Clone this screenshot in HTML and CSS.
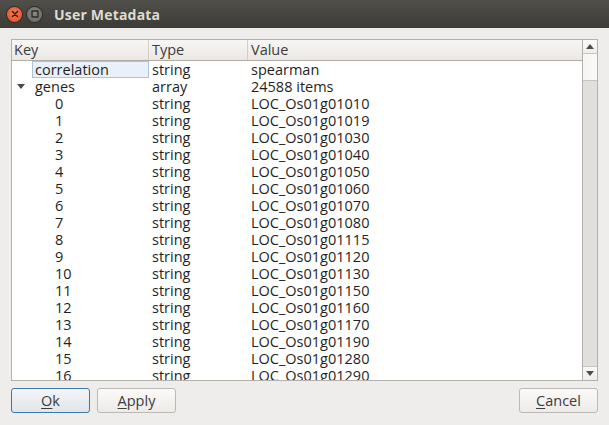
FILE: index.html
```html
<!DOCTYPE html>
<html>
<head>
<meta charset="utf-8">
<link rel="stylesheet" href="styles.css">
</head>
<body>
<div class="window">
  <div class="titlebar">
    <span class="tb-btn close"><svg width="14" height="14" viewBox="0 0 14 14"><path d="M4.5 4.5 L9.5 9.5 M9.5 4.5 L4.5 9.5" stroke="#3a1a10" stroke-width="1.5" stroke-linecap="round"/></svg></span>
    <span class="tb-btn mini"><svg width="14" height="14" viewBox="0 0 14 14"><rect x="4" y="4" width="6" height="6" rx="0.5" fill="none" stroke="#2c2c2a" stroke-width="1.4"/></svg></span>
    <span class="title">User Metadata</span>
  </div>
  <div class="content">
    <div class="frame">
      <div class="tree">
        <div class="header">
          <div class="hcell c1">Key</div>
          <div class="hcell c2">Type</div>
          <div class="hcell c3">Value</div>
        </div>
        <div class="rows">
          <div class="row"><div class="cell c1"><span class="edit">correlation</span></div><div class="cell c2">string</div><div class="cell c3">spearman</div></div>
          <div class="row"><div class="cell c1"><span class="arrow"></span><span class="name">genes</span></div><div class="cell c2">array</div><div class="cell c3">24588 items</div></div>
          <div class="row"><div class="cell c1 idx">0</div><div class="cell c2">string</div><div class="cell c3">LOC_Os01g01010</div></div>
          <div class="row"><div class="cell c1 idx">1</div><div class="cell c2">string</div><div class="cell c3">LOC_Os01g01019</div></div>
          <div class="row"><div class="cell c1 idx">2</div><div class="cell c2">string</div><div class="cell c3">LOC_Os01g01030</div></div>
          <div class="row"><div class="cell c1 idx">3</div><div class="cell c2">string</div><div class="cell c3">LOC_Os01g01040</div></div>
          <div class="row"><div class="cell c1 idx">4</div><div class="cell c2">string</div><div class="cell c3">LOC_Os01g01050</div></div>
          <div class="row"><div class="cell c1 idx">5</div><div class="cell c2">string</div><div class="cell c3">LOC_Os01g01060</div></div>
          <div class="row"><div class="cell c1 idx">6</div><div class="cell c2">string</div><div class="cell c3">LOC_Os01g01070</div></div>
          <div class="row"><div class="cell c1 idx">7</div><div class="cell c2">string</div><div class="cell c3">LOC_Os01g01080</div></div>
          <div class="row"><div class="cell c1 idx">8</div><div class="cell c2">string</div><div class="cell c3">LOC_Os01g01115</div></div>
          <div class="row"><div class="cell c1 idx">9</div><div class="cell c2">string</div><div class="cell c3">LOC_Os01g01120</div></div>
          <div class="row"><div class="cell c1 idx">10</div><div class="cell c2">string</div><div class="cell c3">LOC_Os01g01130</div></div>
          <div class="row"><div class="cell c1 idx">11</div><div class="cell c2">string</div><div class="cell c3">LOC_Os01g01150</div></div>
          <div class="row"><div class="cell c1 idx">12</div><div class="cell c2">string</div><div class="cell c3">LOC_Os01g01160</div></div>
          <div class="row"><div class="cell c1 idx">13</div><div class="cell c2">string</div><div class="cell c3">LOC_Os01g01170</div></div>
          <div class="row"><div class="cell c1 idx">14</div><div class="cell c2">string</div><div class="cell c3">LOC_Os01g01190</div></div>
          <div class="row"><div class="cell c1 idx">15</div><div class="cell c2">string</div><div class="cell c3">LOC_Os01g01280</div></div>
          <div class="row"><div class="cell c1 idx">16</div><div class="cell c2">string</div><div class="cell c3">LOC_Os01g01290</div></div>
        </div>
      </div>
      <div class="vscroll">
        <div class="sb-btn up"><span class="tri-up"></span></div>
        <div class="sb-thumb"></div>
        <div class="sb-track"></div>
        <div class="sb-btn down"><span class="tri-down"></span></div>
      </div>
    </div>
    <div class="buttons">
      <button class="btn default"><u>O</u>k</button>
      <button class="btn"><u>A</u>pply</button>
      <span class="spacer"></span>
      <button class="btn"><u>C</u>ancel</button>
    </div>
  </div>
</div>
</body>
</html>
```

FILE: styles.css
```css
html, body {
  margin: 0;
  padding: 0;
  width: 609px;
  height: 425px;
  overflow: hidden;
  background: #efedeb;
}
.window {
  width: 609px;
  height: 425px;
  display: flex;
  flex-direction: column;
  font-family: "Open Sans", "DejaVu Sans", sans-serif;
  font-size: 14.5px;
  color: #3c3c3c;
}
.titlebar {
  height: 28px;
  flex: none;
  background: linear-gradient(#504f4a, #3c3b37);
  display: flex;
  align-items: center;
  padding-left: 7px;
}
.tb-btn {
  width: 15px;
  height: 15px;
  border-radius: 50%;
  display: flex;
  align-items: center;
  justify-content: center;
  margin-right: 5px;
}
.tb-btn svg { display: block; }
.close {
  background: radial-gradient(circle at 50% 40%, #f47a50, #e0501c);
  box-shadow: 0 0 0 1px #3a2b24;
}
.mini {
  background: radial-gradient(circle at 50% 40%, #8a8983, #64635e);
  box-shadow: 0 0 0 1px #2f2e2b;
}
.title {
  margin-left: 7px;
  color: #dfdbd2;
  font-weight: bold;
  font-size: 14px;
  font-family: "Open Sans", "DejaVu Sans", sans-serif;
  letter-spacing: 0.2px;
}
.content {
  flex: 1;
  display: flex;
  flex-direction: column;
  padding: 11px 11px 0 11px;
}
.frame {
  height: 342px;
  border: 1px solid #b4b1ac;
  display: flex;
  background: #ffffff;
  box-sizing: border-box;
}
.tree {
  flex: 1;
  display: flex;
  flex-direction: column;
  overflow: hidden;
}
.header {
  height: 21px;
  flex: none;
  display: grid;
  grid-template-columns: 137px 99px 1fr;
  background: linear-gradient(#f8f6f4, #ebe8e4);
  border-bottom: 1px solid #b0ada8;
  box-sizing: border-box;
  color: #3c3c3c;
}
.hcell {
  padding-left: 2px;
  line-height: 20px;
  border-right: 1px solid #d2cfca;
}
.hcell.c2, .hcell.c3 { padding-left: 3px; }
.hcell.c3 { border-right: none; }
.rows {
  flex: 1;
  overflow: hidden;
}
.row {
  display: grid;
  grid-template-columns: 137px 99px 1fr;
  height: 17px;
  line-height: 17px;
  color: #1f1f1f;
}
.cell {
  padding-left: 3px;
  white-space: nowrap;
}
.cell.c1 {
  display: flex;
  align-items: center;
  padding-left: 20px;
}
.cell.idx { padding-left: 43px; }
.edit {
  display: block;
  width: 114px;
  height: 15px;
  line-height: 15px;
  padding-left: 2px;
  border: 1px solid #a9c3dc;
  background: #e8f1f9;
}
.arrow {
  width: 0;
  height: 0;
  border-left: 4px solid transparent;
  border-right: 4px solid transparent;
  border-top: 5px solid #4a4a4a;
  margin-left: -15px;
  margin-right: 10px;
}
.name { display: block; }
.vscroll {
  width: 14px;
  flex: none;
  border-left: 1px solid #b4b1ac;
  display: flex;
  flex-direction: column;
  background: #e1dfdc;
}
.sb-btn {
  height: 13px;
  flex: none;
  background: linear-gradient(#fbfaf9, #efedea);
  display: flex;
  align-items: center;
  justify-content: center;
}
.sb-btn.up { border-bottom: 1px solid #c8c5c0; }
.sb-btn.down { border-top: 1px solid #c8c5c0; }
.sb-thumb {
  height: 26px;
  flex: none;
  background: linear-gradient(90deg, #f6f5f3, #faf9f8);
  border-bottom: 1px solid #c8c5c0;
}
.sb-track { flex: 1; }
.tri-up {
  width: 0; height: 0;
  border-left: 4px solid transparent;
  border-right: 4px solid transparent;
  border-bottom: 5px solid #4e4d4a;
}
.tri-down {
  width: 0; height: 0;
  border-left: 4px solid transparent;
  border-right: 4px solid transparent;
  border-top: 5px solid #4e4d4a;
}
.buttons {
  display: flex;
  margin-top: 7px;
  gap: 7px;
}
.spacer { flex: 1; }
.btn {
  width: 79px;
  height: 25px;
  box-sizing: border-box;
  border: 1px solid #bcb9b4;
  border-radius: 3px;
  background: linear-gradient(#fbfaf9, #ecebe8);
  font-family: "Open Sans", "DejaVu Sans", sans-serif;
  font-size: 14.5px;
  color: #3c3c3c;
  padding: 0;
  line-height: 22px;
}
.btn u { text-decoration-thickness: 1px; text-underline-offset: 2px; }
.btn.default {
  border-color: #3d78a8;
  background: linear-gradient(#f3f5f7, #e1e5e9);
}
```
